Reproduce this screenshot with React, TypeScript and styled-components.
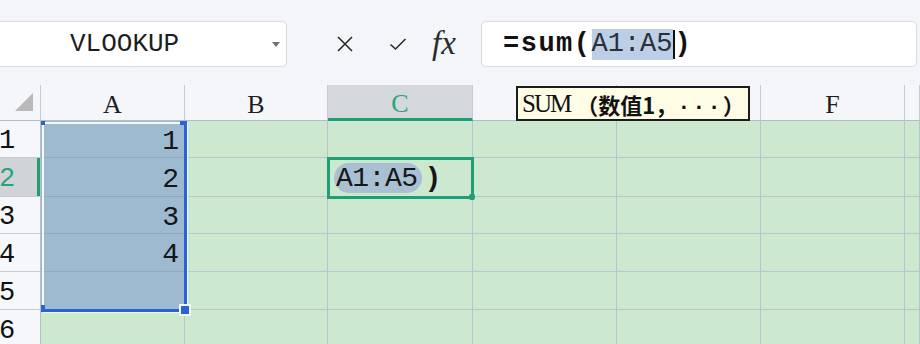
import styled, { createGlobalStyle } from 'styled-components'

const GlobalStyle = createGlobalStyle`
  html, body {
    margin: 0;
    padding: 0;
    background: #f3f5f9;
    overflow: hidden;
  }
  body {
    width: 920px;
    height: 344px;
    font-family: 'Liberation Mono', monospace;
  }
`

const mono = `'Liberation Mono', 'DejaVu Sans Mono', monospace`
const serif = `'Liberation Serif', 'DejaVu Serif', serif`

const gridLine = '#b7c7c9'
const headerLine = '#c6ccd5'
const green = '#1f9e76'
const blue = '#2c62d4'

// the last column is only partly on screen, so its label is not shown
const columns = ['A', 'B', 'C', 'D', 'E', 'F', '']
const rows = [1, 2, 3, 4, 5, 6]
const values: Record<string, string> = { A1: '1', A2: '2', A3: '3', A4: '4' }

const activeCol = 'C'
const activeRow = 2
const selection = { col: 'A', from: 1, to: 5 }

export default function App() {
  return (
    <>
      <GlobalStyle />
      <Toolbar>
        <NameBox>
          <NameText>VLOOKUP</NameText>
          <DropArrow />
        </NameBox>
        <ToolIcon $ml={49}>
          <svg width="18" height="18" viewBox="0 0 18 18">
            <path d="M2 2 L16 16 M16 2 L2 16" stroke="#2b2b2b" strokeWidth="1.6" fill="none" />
          </svg>
        </ToolIcon>
        <ToolIcon $ml={35}>
          <svg width="18" height="18" viewBox="0 0 18 18">
            <path d="M1.5 9.5 L6.5 14 L16.5 4" stroke="#2b2b2b" strokeWidth="1.6" fill="none" />
          </svg>
        </ToolIcon>
        <Fx>fx</Fx>
        <FormulaBox>
          <Bold>=sum(</Bold>
          <RefHighlight>A1:A5</RefHighlight>
          <Caret />
          <Bold>)</Bold>
        </FormulaBox>
      </Toolbar>

      <Sheet>
        <Corner $col={1} $row={1}>
          <CornerTriangle />
        </Corner>
        {columns.map((c, i) => (
          <ColHeader key={i} $col={i + 2} $row={1} $active={c === activeCol}>
            {c}
          </ColHeader>
        ))}
        {rows.map((r) => (
          <RowHeader key={r} $col={1} $row={r + 1} $active={r === activeRow}>
            {r}
          </RowHeader>
        ))}
        {rows.map((r) =>
          columns.map((c, i) => {
            if (c === activeCol && r === activeRow) return null
            const selected = c === selection.col && r >= selection.from && r <= selection.to
            return (
              <Cell key={i + '-' + r} $col={i + 2} $row={r + 1} $selected={selected}>
                {values[c + r]}
              </Cell>
            )
          }),
        )}

        <Selection $col={2} $row={selection.from + 1} $span={selection.to - selection.from + 1}>
          <Handle $pos="tl" />
          <Handle $pos="tr" />
          <Handle $pos="bl" />
          <FillHandle />
        </Selection>

        <ActiveCell $col={columns.indexOf(activeCol) + 2} $row={activeRow + 1}>
          <CellRef>A1:A5</CellRef>
          <CellParen>)</CellParen>
          <ActiveHandle />
        </ActiveCell>

        <Tooltip>
          <TipName>SUM</TipName>
          <TipArgs>（数值1，</TipArgs>
          <TipDots>...</TipDots>
          <TipArgs>）</TipArgs>
        </Tooltip>
      </Sheet>
    </>
  )
}

interface GridPos {
  $col: number
  $row: number
}

const Toolbar = styled.div`
  height: 85px;
  box-sizing: border-box;
  padding-top: 21px;
  display: flex;
  align-items: flex-start;
`

const NameBox = styled.div`
  margin-left: -4px;
  width: 291px;
  height: 46px;
  box-sizing: border-box;
  background: #fff;
  border: 1px solid #d8dbe1;
  border-radius: 5px;
  display: flex;
  align-items: center;
  justify-content: space-between;
  padding: 0 6px 0 73px;
`

const NameText = styled.span`
  font-family: ${mono};
  font-size: 26px;
  color: #1d1d1d;
`

const DropArrow = styled.span`
  width: 0;
  height: 0;
  border-left: 4px solid transparent;
  border-right: 4px solid transparent;
  border-top: 5px solid #6b7280;
`

const ToolIcon = styled.div<{ $ml: number }>`
  margin-left: ${(p) => p.$ml}px;
  height: 46px;
  display: flex;
  align-items: center;
`

const Fx = styled.div`
  margin-left: 25px;
  width: 30px;
  height: 46px;
  line-height: 44px;
  font-family: ${serif};
  font-style: italic;
  font-size: 33px;
  color: #2b2b2b;
`

const FormulaBox = styled.div`
  flex: 1;
  margin-left: 19px;
  margin-right: 3px;
  height: 46px;
  box-sizing: border-box;
  background: #fff;
  border: 1px solid #d8dbe1;
  border-radius: 5px;
  display: flex;
  align-items: center;
  padding-left: 21px;
  font-family: ${mono};
  font-size: 27px;
  color: #111;
`

const Bold = styled.span`
  font-weight: bold;
  letter-spacing: 1.5px;
`

const RefHighlight = styled.span`
  background: #bccfe6;
  color: #2a2f38;
  height: 31px;
  line-height: 31px;
  display: inline-block;
`

const Caret = styled.span`
  display: inline-block;
  width: 2px;
  height: 29px;
  background: #111;
`

const Sheet = styled.div`
  position: relative;
  width: 920px;
  overflow: hidden;
  display: grid;
  grid-template-columns: 41px 144px 143px 145px 144px 144px 144px 1fr;
  grid-template-rows: 36px 37px 39px 37px 38px 38px 38px;
`

const Placed = styled.div<GridPos>`
  grid-column: ${(p) => p.$col};
  grid-row: ${(p) => p.$row};
  box-sizing: border-box;
`

const Corner = styled(Placed)`
  background: #f4f6fa;
  border-right: 1px solid ${headerLine};
  border-bottom: 1px solid #b4bcc6;
  position: relative;
`

const CornerTriangle = styled.span`
  position: absolute;
  left: 15px;
  top: 8px;
  width: 0;
  height: 0;
  border-left: 18px solid transparent;
  border-bottom: 18px solid #b9b9b9;
`

const ColHeader = styled(Placed)<{ $active: boolean }>`
  background: ${(p) => (p.$active ? '#d4d7dc' : '#f4f6fa')};
  border-right: 1px solid ${headerLine};
  border-bottom: ${(p) => (p.$active ? `3px solid ${green}` : '1px solid #b4bcc6')};
  display: flex;
  align-items: center;
  justify-content: center;
  padding-top: 4px;
  font-family: ${serif};
  font-size: 26px;
  color: ${(p) => (p.$active ? '#2ba380' : '#1d1d1d')};
`

const RowHeader = styled(Placed)<{ $active: boolean }>`
  background: ${(p) => (p.$active ? '#d1d4d7' : '#f6f7fa')};
  border-right: 1px solid #b4bcc6;
  border-bottom: 1px solid ${headerLine};
  box-shadow: ${(p) => (p.$active ? `inset -3px 0 0 ${green}` : 'none')};
  display: flex;
  align-items: center;
  padding-top: 4px;
  margin-left: -1px;
  font-family: ${mono};
  font-size: 27px;
  color: ${(p) => (p.$active ? '#2ba380' : '#111')};
`

const Cell = styled(Placed)<{ $selected: boolean }>`
  background: ${(p) => (p.$selected ? '#9dbad1' : '#cce8cf')};
  border-right: 1px solid ${gridLine};
  border-bottom: 1px solid ${(p) => (p.$selected ? '#8eaac0' : gridLine)};
  display: flex;
  align-items: center;
  justify-content: flex-end;
  padding: 4px 5px 0 0;
  font-family: ${mono};
  font-size: 28px;
  color: #161616;
`

const Selection = styled.div<GridPos & { $span: number }>`
  grid-column: ${(p) => p.$col};
  grid-row: ${(p) => p.$row} / span ${(p) => p.$span};
  position: relative;
  margin: 1px -2px -2px 1px;
  border-left: 2px solid #f4f8fb;
  border-top: 2px solid #f4f8fb;
  border-right: 3px solid ${blue};
  border-bottom: 3px solid ${blue};
  box-shadow: 1px 1px 0 #f0f5f8;
  pointer-events: none;
`

const Handle = styled.span<{ $pos: 'tl' | 'tr' | 'bl' }>`
  position: absolute;
  background: ${blue};
  ${(p) =>
    p.$pos === 'tl'
      ? 'left: -3px; top: -3px; width: 4px; height: 4px;'
      : p.$pos === 'tr'
        ? 'right: -3px; top: -3px; width: 7px; height: 4px;'
        : 'left: -3px; bottom: -3px; width: 4px; height: 7px;'}
`

const FillHandle = styled.span`
  position: absolute;
  right: -7px;
  bottom: -7px;
  width: 8px;
  height: 8px;
  background: ${blue};
  border: 2px solid #f4f8fb;
`

const ActiveCell = styled(Placed)`
  position: relative;
  margin: -1px -1px -2px -1px;
  background: #cce8cf;
  border: 3px solid ${green};
  display: flex;
  align-items: center;
  padding-left: 4px;
  font-family: ${mono};
  font-size: 28px;
  color: #161616;
`

const CellRef = styled.span`
  background: #a9bfd2;
  border-radius: 15px;
  height: 30px;
  line-height: 32px;
  padding: 0 4px 0 2px;
  letter-spacing: -0.5px;
`

const CellParen = styled.span`
  font-weight: bold;
  margin-left: 3px;
`

const ActiveHandle = styled.span`
  position: absolute;
  right: -4px;
  bottom: -4px;
  width: 6px;
  height: 6px;
  border-radius: 2px;
  background: ${green};
`

const Tooltip = styled.div`
  position: absolute;
  left: 516px;
  top: 1px;
  width: 234px;
  height: 35px;
  box-sizing: border-box;
  background: #fffce6;
  border: 2px solid #1c1c1c;
  display: flex;
  align-items: center;
  padding-left: 4px;
  white-space: nowrap;
  overflow: hidden;
`

const TipName = styled.span`
  font-family: ${serif};
  font-size: 25px;
  line-height: 30px;
  letter-spacing: -2px;
  color: #111;
  margin-right: 6px;
`

const TipArgs = styled.span`
  font-family: 'Noto Sans CJK SC', sans-serif;
  font-weight: bold;
  font-size: 22px;
  line-height: 30px;
  color: #111;
`

const TipDots = styled.span`
  font-family: ${mono};
  font-weight: bold;
  font-size: 22px;
  letter-spacing: 2px;
  color: #111;
`
